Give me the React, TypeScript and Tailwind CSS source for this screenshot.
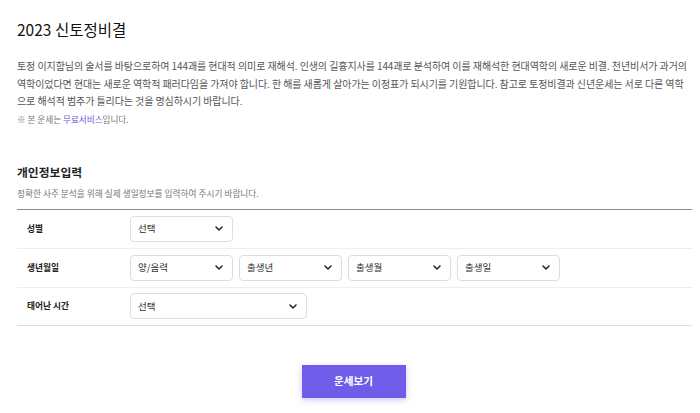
import React from "react";

const font = { fontFamily: '"Noto Sans CJK KR", "Noto Sans", sans-serif' };

function Chevron() {
  return (
    <svg width="8" height="5" viewBox="0 0 8 5" className="shrink-0">
      <path d="M1 1 L4 4 L7 1" fill="none" stroke="#222" strokeWidth="1.5" strokeLinecap="round" strokeLinejoin="round" />
    </svg>
  );
}

function Select({ label, w }: { label: string; w: string }) {
  return (
    <div className={`${w} h-[26px] border border-[#dddddd] rounded-[4px] bg-white flex items-center justify-between pl-[7px] pr-[9px]`}>
      <span className="text-[9.5px] text-[#333]">{label}</span>
      <Chevron />
    </div>
  );
}

function Row({ label, children, border, h }: { label: string; children: React.ReactNode; border: string; h: string }) {
  return (
    <div className={`flex items-center ${h} ${border}`}>
      <div className="w-[113px] pl-[10px] text-[8.7px] font-bold text-[#222]">{label}</div>
      <div className="flex gap-[6px]">{children}</div>
    </div>
  );
}

export default function App() {
  return (
    <div style={font} className="w-[700px] h-[413px] bg-white pl-[17px] pr-[8px] pt-[17px] overflow-hidden">
      <h1 className="text-[15.5px] leading-[24px] text-[#111] font-normal">2023 신토정비결</h1>
      <p className="mt-[16px] text-[10px] leading-[17.5px] text-[#555] tracking-[-0.08px]">
        토정 이지함님의 술서를 바탕으로하여 144괘를 현대적 의미로 재해석. 인생의 길흉지사를 144괘로 분석하여 이를 재해석한 현대역학의 새로운 비결. 천년비서가 과거의 역학이었다면 현대는 새로운 역학적 패러다임을 가져야 합니다. 한 해를 새롭게 살아가는 이정표가 되시기를 기원합니다. 참고로 토정비결과 신년운세는 서로 다른 역학으로 해석적 범주가 틀리다는 것을 명심하시기 바랍니다.
      </p>
      <p className="mt-[1px] text-[8.6px] leading-[16px] text-[#777]">
        ※ 본 운세는 <span className="text-[#6b5bd6]">무료서비스</span>입니다.
      </p>
      <h2 className="mt-[36px] text-[11.8px] leading-[18px] font-bold text-[#222]">개인정보입력</h2>
      <p className="mt-[5px] text-[8.7px] leading-[16px] text-[#777]">정확한 사주 분석을 위해 실제 생일정보를 입력하여 주시기 바랍니다.</p>
      <div className="mt-[7px] border-t border-[#8a8a8a]">
        <Row label="성별" h="h-[39px]" border="border-b border-[#eeeeee]">
          <Select label="선택" w="w-[103px]" />
        </Row>
        <Row label="생년월일" h="h-[39px]" border="border-b border-[#eeeeee]">
          <Select label="양/음력" w="w-[103px]" />
          <Select label="출생년" w="w-[103px]" />
          <Select label="출생월" w="w-[103px]" />
          <Select label="출생일" w="w-[103px]" />
        </Row>
        <Row label="태어난 시간" h="h-[38px]" border="border-b border-[#dddddd]">
          <Select label="선택" w="w-[177px]" />
        </Row>
      </div>
      <div className="flex justify-center mt-[39px] pr-[2px]">
        <button className="w-[104px] h-[33px] bg-[#6f5ce8] text-white text-[10.6px] font-bold shadow-[0_2px_6px_rgba(111,92,232,0.35)]">
          운세보기
        </button>
      </div>
    </div>
  );
}
